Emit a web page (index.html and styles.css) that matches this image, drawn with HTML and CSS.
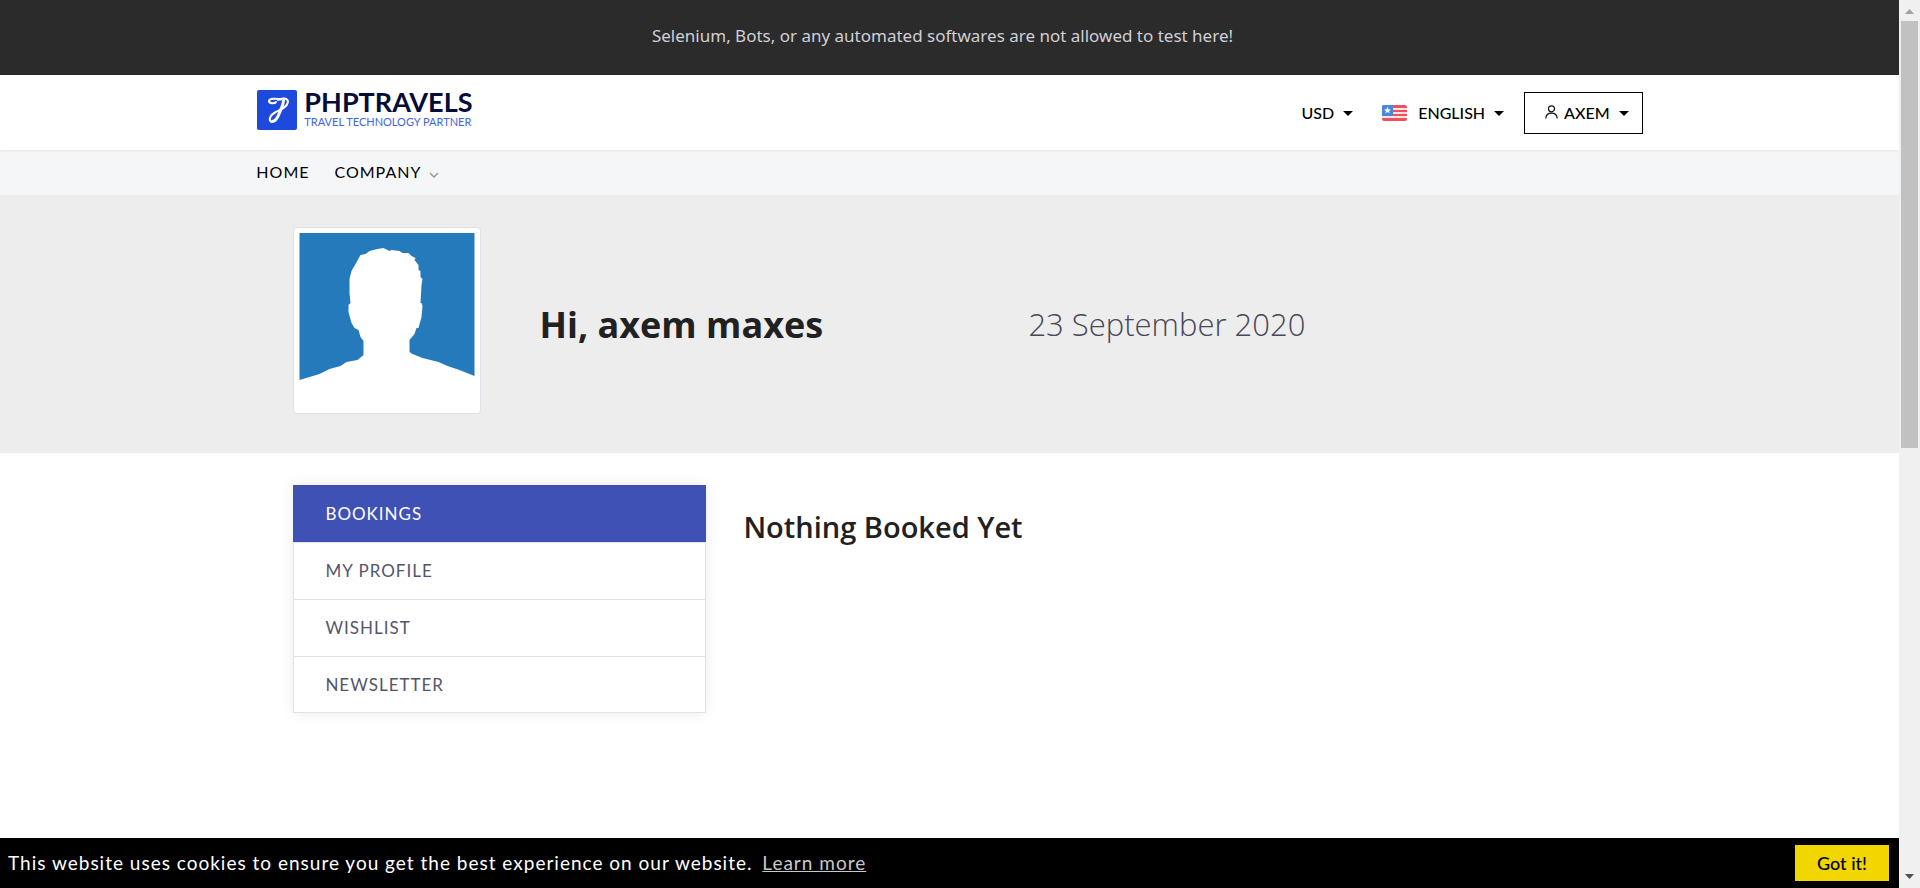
FILE: index.html
```html
<!DOCTYPE html>
<html lang="en">
<head>
<meta charset="utf-8">
<title>My Account - PHPTRAVELS</title>
<link rel="stylesheet" href="styles.css">
</head>
<body>
<div class="window">
  <div class="page">
    <div class="content">
      <div class="notice">Selenium, Bots, or any automated softwares are not allowed to test here!</div>

      <header class="header">
        <div class="container header-row">
          <a class="logo" href="#">
            <svg class="logo-mark" viewBox="0 0 40 40" aria-hidden="true">
              <rect width="40" height="40" rx="2" fill="#1d49dc"/>
              <g fill="none" stroke="#fff" stroke-linecap="round" stroke-linejoin="round">
                <path stroke-width="2" d="M19 12C17.500 13.800 12.500 13.800 12 11.200C12 8 20 8.300 24 9.500"/>
                <path stroke-width="2" d="M21 10C25 7.500 31 8 31 12C30 17.500 23 20 18 22.500C13 25 11.500 30 14 31.800"/>
                <path stroke-width="3" d="M26.500 10C26.500 15 23.500 20 22 24C20.500 28 18 31.500 15 31.500"/>
              </g>
            </svg>
            <span class="logo-text">
              <span class="logo-name">PHPTRAVELS</span>
              <span class="logo-tag">TRAVEL TECHNOLOGY PARTNER</span>
            </span>
          </a>
          <div class="tools">
            <button class="tool" type="button">USD<span class="caret"></span></button>
            <button class="tool tool-language" type="button">
              <svg class="flag" viewBox="0 0 25 16" aria-hidden="true">
                <rect width="25" height="16" rx="2" fill="#f05060"/>
                <path d="M10 3h15v2H10zM10 7h15v2H10zM0 11h25v2H0z" fill="#fbe3e6"/>
                <path d="M2 0h9v11H0V2a2 2 0 0 1 2-2z" fill="#4b87db"/>
                <path d="M5.500 2l1 2.200 2.300.200-1.800 1.500.600 2.300-2.100-1.200-2.100 1.200.600-2.300-1.800-1.500 2.300-.200z" fill="#fff"/>
              </svg>
              ENGLISH<span class="caret"></span>
            </button>
            <button class="tool tool-account" type="button">
              <svg class="user-icon" viewBox="0 0 13 14" aria-hidden="true">
                <g fill="none" stroke="#111" stroke-width="1.200"><circle cx="6.500" cy="3.800" r="3"/><path d="M.8 13.500C1 9.800 3 8.200 6.500 8.200S12 9.800 12.200 13.500"/></g>
              </svg>
              AXEM<span class="caret"></span>
            </button>
          </div>
        </div>
      </header>

      <nav class="nav" aria-label="Main">
        <div class="container nav-row">
          <a href="#">HOME</a>
          <a href="#">COMPANY
            <svg class="chevron" viewBox="0 0 10 6" aria-hidden="true"><path d="M1 1l4 4 4-4" fill="none" stroke="#999" stroke-width="1.500"/></svg>
          </a>
        </div>
      </nav>

      <section class="hero">
        <div class="inner hero-row">
          <svg class="avatar" viewBox="0 0 175 175" role="img" aria-label="Profile photo">
            <rect width="175" height="175" fill="#fff"/>
            <path fill="#257abc" d="M0 0H175V143L160 137L148 133L139 129L123 125L113 121L110 119V107L115 101L117 95L119 95L122 84L123 73L122 70L121 70L122 52L123 46L121 44L121 38L119 37L119 32L115 27L116 25L112 23L109 20L103 20L100 18L92 17L90 18L84 15L78 16L70 18L66 21L61 22L56 31L52 38L50 46L50 60L51 70L49 72L49 79L52 90L55 95L59 97L61 104L64 108V122L58 127L47 129L41 133L30 136L20 141L0 147Z"/>
          </svg>
          <h1 class="greeting">Hi, axem maxes</h1>
          <p class="date">23 September 2020</p>
        </div>
      </section>

      <main class="inner main-row">
        <ul class="menu">
          <li><a class="menu-link active" href="#">BOOKINGS</a></li>
          <li><a class="menu-link" href="#">MY PROFILE</a></li>
          <li><a class="menu-link" href="#">WISHLIST</a></li>
          <li><a class="menu-link" href="#">NEWSLETTER</a></li>
        </ul>
        <h2 class="empty">Nothing Booked Yet</h2>
      </main>
    </div>

    <div class="cookies">
      <p class="cookies-text">This website uses cookies to ensure you get the best experience on our website. <a href="#">Learn more</a></p>
      <button class="cookies-button" type="button">Got it!</button>
    </div>
  </div>

  <div class="scrollbar" aria-hidden="true">
    <svg class="arrow" viewBox="0 0 9 5"><path d="M4.500 0L9 5H0z" fill="#a3a3a3"/></svg>
    <div class="track"><div class="thumb"></div></div>
    <svg class="arrow" viewBox="0 0 9 5"><path d="M4.500 5L9 0H0z" fill="#505050"/></svg>
  </div>
</div>
</body>
</html>
```
FILE: styles.css
```css
* { box-sizing: border-box; }

body {
  margin: 0;
  background: #fff;
  color: #212121;
  font: 17px/24px "Noto Sans", "Open Sans", sans-serif;
}

h1, h2, p, ul { margin: 0; padding: 0; }
ul { list-style: none; }
a { color: inherit; text-decoration: none; }
button { font: inherit; color: inherit; cursor: pointer; }

.window { display: flex; height: 100vh; }
.page { flex: 1; display: flex; flex-direction: column; min-width: 0; }
.content { flex: 1; min-height: 0; overflow: hidden; }

.container { width: 73%; margin: 0 auto; }
.inner { width: 69.1%; margin: 0 auto; }

.notice {
  padding: 24px 28px 27px 14px;
  background: #2b2b2b;
  color: #d0cfd6;
  text-align: center;
}

.header, .nav, .menu, .cookies { font-family: Lato, "Open Sans", sans-serif; }

.header { position: relative; background: #fff; box-shadow: 0 0 3px rgba(0, 0, 0, .12); }
.header-row { display: flex; align-items: center; justify-content: space-between; height: 75px; }

.logo { display: flex; gap: 7px; padding: 0 0 6px 1px; }
.logo-mark { width: 40px; height: 40px; }
.logo-text { display: flex; flex-direction: column; }
.logo-name { color: #060c38; font-size: 27px; font-weight: 700; line-height: 24px; }
.logo-tag { color: #4065e0; font-size: 11px; line-height: 16px; }

.tools { display: flex; align-items: center; padding-top: 1px; color: #000; font-size: 16px; font-weight: 500; }
.tool { display: flex; align-items: center; padding: 0; border: 0; background: none; }
.tool-language { margin: 0 20px 0 29px; }
.tool-account { height: 42px; padding: 0 13px 0 20px; border: 1px solid #000; }
.caret { margin-left: 9px; border: 5px solid transparent; border-top-color: currentColor; border-bottom: 0; }
.flag { width: 25px; height: 16px; margin-right: 11px; }
.user-icon { width: 13px; height: 14px; margin: 0 6px 3px 0; }

.nav { background: #f4f6f8; color: #000; }
.nav-row { display: flex; gap: 25px; padding: 10px 0 11px; font-size: 16px; letter-spacing: 1px; }
.chevron { width: 10px; height: 6px; margin-left: 3px; }

.hero { background: #ededed; padding: 32px 0 39px; font-family: "Open Sans", sans-serif; }
.hero-row { display: grid; grid-template-columns: 188px 487px 1fr; align-items: center; }
.avatar { width: 188px; height: 187px; padding: 5px; border: 1px solid #dee2e6; border-radius: 4px; background: #fff; }
.greeting { padding: 8px 0 0 58px; font-size: 36px; font-weight: 700; line-height: 48px; }
.date { padding: 6px 0 0 60px; color: #484858; font-size: 31px; font-weight: 300; line-height: 40px; }

.main-row { display: grid; grid-template-columns: 413px 1fr; gap: 37px; align-items: start; padding-top: 32px; }
.menu { border: 1px solid #e2e2e2; border-top: 0; box-shadow: 0 0 14px rgba(0, 0, 0, .08); }
.menu-link { display: block; padding: 16px 31px; border-top: 1px solid #e2e2e2; color: #555568; font-size: 17px; letter-spacing: 1px; }
.menu li:last-child .menu-link { padding-bottom: 15px; }
.menu .active { margin: 0 -1px; padding: 17px 32px 16px; border: 0; background: #3f51b5; color: #fff; }
.empty { padding-top: 22px; font-family: "Open Sans", sans-serif; font-size: 29px; font-weight: 600; line-height: 40px; }

.cookies { display: flex; align-items: center; justify-content: space-between; padding: 7px 10px 7px 8px; background: #000; color: #fff; }
.cookies-text { font-size: 19px; letter-spacing: 1px; }
.cookies-text a { margin-left: 4px; color: #c8c8c8; text-decoration: underline; }
.cookies-button { width: 94px; height: 36px; border: 0; background: #f1d600; color: #000; font-size: 18px; font-weight: 500; }

.scrollbar { display: flex; flex-direction: column; align-items: center; width: 21px; padding: 9px 0; background: #f0f0f0; }
.arrow { width: 9px; height: 5px; }
.track { flex: 1; width: 17px; padding-top: 7px; }
.thumb { height: 50%; background: #c1c1c1; }
```
